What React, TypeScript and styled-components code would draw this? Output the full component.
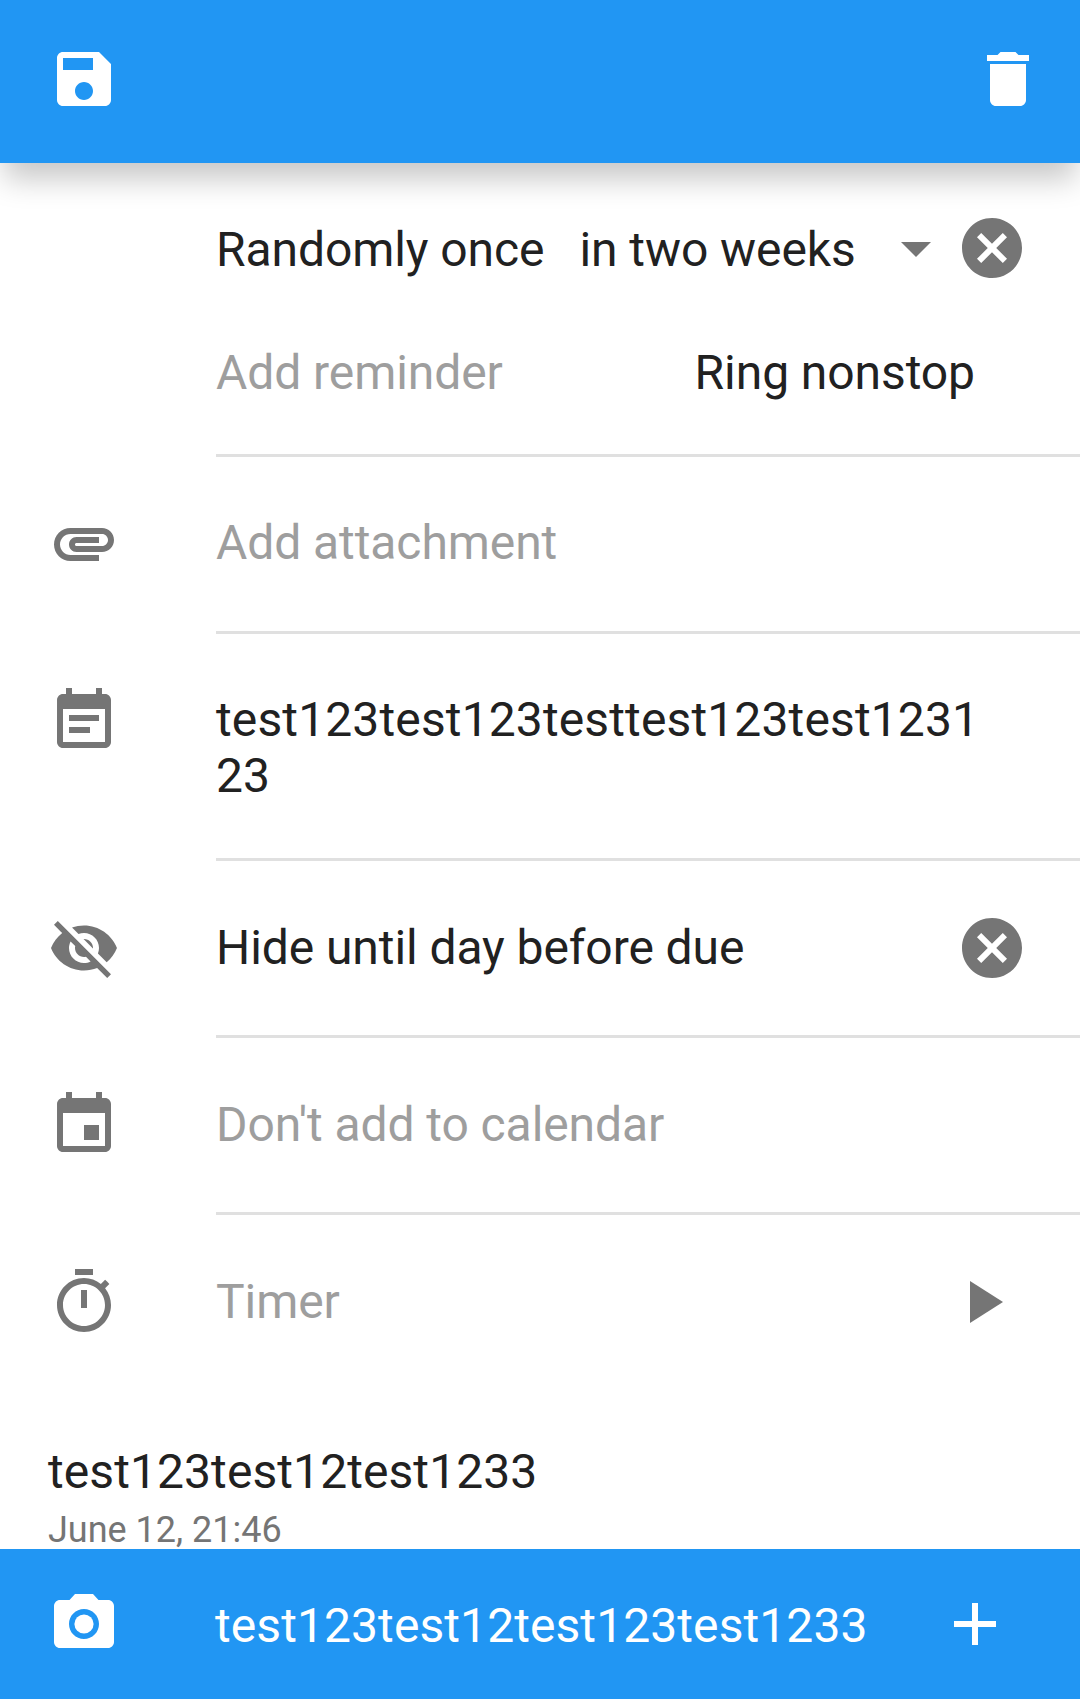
import React from 'react';
import styled, { createGlobalStyle } from 'styled-components';

const GlobalStyle = createGlobalStyle`
  html, body {
    margin: 0;
    padding: 0;
    background: #fff;
  }
  * {
    box-sizing: border-box;
  }
`;

const paths = {
  save: 'M17 3H5c-1.11 0-2 .9-2 2v14c0 1.1.89 2 2 2h14c1.1 0 2-.9 2-2V7l-4-4zm-5 16c-1.66 0-3-1.34-3-3s1.34-3 3-3 3 1.34 3 3-1.34 3-3 3zm3-10H5V5h10v4z',
  trash: 'M6 19c0 1.1.9 2 2 2h8c1.1 0 2-.9 2-2V7H6v12zM19 4h-3.5l-1-1h-5l-1 1H5v2h14V4z',
  cancel: 'M12 2C6.47 2 2 6.47 2 12s4.47 10 10 10 10-4.47 10-10S17.53 2 12 2zm5 13.59L15.59 17 12 13.41 8.41 17 7 15.59 10.59 12 7 8.41 8.41 7 12 10.59 15.59 7 17 8.41 13.41 12 17 15.59z',
  arrow: 'M7 10l5 5 5-5z',
  clip: 'M2 12.5C2 9.46 4.46 7 7.5 7H18c2.21 0 4 1.79 4 4s-1.79 4-4 4H9.5C8.12 15 7 13.88 7 12.5S8.12 10 9.5 10H17v2H9.41c-.55 0-.55 1 0 1H18c1.1 0 2-.9 2-2s-.9-2-2-2H7.5C5.57 9 4 10.57 4 12.5S5.57 16 7.5 16H17v2H7.5C4.46 18 2 15.54 2 12.5z',
  note: 'M17 10H7v2h10v-2zm2-7h-1V1h-2v2H8V1H6v2H5c-1.11 0-1.99.9-1.99 2L3 19c0 1.1.89 2 2 2h14c1.1 0 2-.9 2-2V5c0-1.1-.9-2-2-2zm0 16H5V8h14v11zm-5-5H7v2h7v-2z',
  eyeOff: 'M12 7c2.76 0 5 2.24 5 5 0 .65-.13 1.26-.36 1.83l2.92 2.92c1.51-1.26 2.7-2.89 3.43-4.75-1.73-4.39-6-7.5-11-7.5-1.4 0-2.74.25-3.98.7l2.16 2.16C10.74 7.13 11.35 7 12 7zM2 4.27l2.28 2.28.46.46C3.08 8.3 1.78 10.02 1 12c1.73 4.39 6 7.5 11 7.5 1.55 0 3.03-.3 4.38-.84l.42.42L19.73 22 21 20.73 3.27 3 2 4.27zM7.53 9.8l1.55 1.55c-.05.21-.08.43-.08.65 0 1.66 1.34 3 3 3 .22 0 .44-.03.65-.08l1.55 1.55c-.67.33-1.41.53-2.2.53-2.76 0-5-2.24-5-5 0-.79.2-1.53.53-2.2zm4.31-.78l3.15 3.15.02-.16c0-1.66-1.34-3-3-3l-.17.01z',
  event: 'M17 12h-5v5h5v-5zM16 1v2H8V1H6v2H5c-1.11 0-1.99.9-1.99 2L3 19c0 1.1.89 2 2 2h14c1.1 0 2-.9 2-2V5c0-1.1-.9-2-2-2h-1V1h-2zm3 18H5V8h14v11z',
  timer: 'M15 1H9v2h6V1zm-4 13h2V8h-2v6zm8.03-6.61l1.42-1.42c-.43-.51-.9-.99-1.41-1.41l-1.42 1.42C16.07 4.74 14.12 4 12 4c-4.97 0-9 4.03-9 9s4.02 9 9 9 9-4.03 9-9c0-2.12-.74-4.07-1.97-5.61zM12 20c-3.87 0-7-3.13-7-7s3.13-7 7-7 7 3.13 7 7-3.13 7-7 7z',
  play: 'M8 5v14l11-7z',
  camera: 'M9 2L7.17 4H4c-1.1 0-2 .9-2 2v12c0 1.1.9 2 2 2h16c1.1 0 2-.9 2-2V6c0-1.1-.9-2-2-2h-3.17L15 2H9zm3 15c-2.76 0-5-2.24-5-5s2.24-5 5-5 5 2.24 5 5-2.24 5-5 5z',
  plus: 'M19 13h-6v6h-2v-6H5v-2h6V5h2v6h6v2z',
};

const Svg = styled.svg<{ $light?: boolean }>`
  display: block;
  flex: none;
  width: 72px;
  height: 72px;
  fill: ${(p) => (p.$light ? '#fff' : '#757575')};
`;

function Icon({ name, light, children }: { name: keyof typeof paths; light?: boolean; children?: React.ReactNode }) {
  return (
    <Svg viewBox="0 0 24 24" $light={light}>
      <path d={paths[name]} />
      {children}
    </Svg>
  );
}

const Screen = styled.div`
  width: 1080px;
  height: 1699px;
  display: flex;
  flex-direction: column;
  overflow: hidden;
  background: #fff;
  font-family: Roboto, "Liberation Sans", sans-serif;
  font-size: 48px;
  color: #212121;
`;

const Toolbar = styled.header`
  position: relative;
  z-index: 2;
  flex: none;
  height: 163px;
  padding: 43px 36px 0 48px;
  display: flex;
  justify-content: space-between;
  align-items: flex-start;
  background: #2196f3;
  box-shadow: 0 20px 28px -4px rgba(0, 0, 0, 0.22);
`;

const Content = styled.main`
  flex: 1;
  min-height: 0;
  overflow: hidden;
`;

const Row = styled.section<{ $bottom?: number }>`
  display: flex;
  align-items: center;
  height: 174px;
  padding: 0 0 ${(p) => p.$bottom ?? 0}px 48px;
`;

const NoteRow = styled.section`
  display: flex;
  align-items: flex-start;
  height: 224px;
  padding: 51px 0 0 48px;
`;

const IconSlot = styled.div`
  flex: none;
  width: 168px;
`;

const Body = styled.div`
  flex: 1;
  min-width: 0;
`;

const Divider = styled.hr`
  height: 3px;
  margin: 0 0 0 216px;
  border: 0;
  background: #e0e0e0;
`;

const Label = styled.span<{ $hint?: boolean }>`
  color: ${(p) => (p.$hint ? '#9e9e9e' : '#212121')};
  letter-spacing: -0.08px;
  white-space: nowrap;
`;

const RowLabel = styled(Label)`
  display: block;
  margin-bottom: 2px;
`;

const Recurrence = styled.section`
  padding: 23px 0 20px 216px;
`;

const RecurrenceLine = styled.div`
  display: flex;
  align-items: center;
  height: 124px;
`;

const RepeatLabel = styled(Label)`
  padding-top: 2px;
`;

const RepeatValue = styled(RepeatLabel)`
  margin-left: 35px;
  flex: 1;
`;

const ClearSlot = styled.div`
  flex: none;
  margin: 0 52px 0 4px;
`;

const RingLabel = styled(Label)`
  margin-left: auto;
  margin-right: 105px;
`;

const SpacedBody = styled(Body)<{ $right: number }>`
  display: flex;
  align-items: center;
  justify-content: space-between;
  padding-right: ${(p) => p.$right}px;
`;

const Notes = styled.div`
  width: 780px;
  margin-top: 7px;
  line-height: 56px;
  letter-spacing: 0.13px;
  word-break: break-all;
  color: #212121;
`;

const CommentBlock = styled.article`
  padding: 53px 48px 0;
`;

const CommentText = styled.div`
  line-height: 60px;
  letter-spacing: 0.08px;
`;

const CommentDate = styled.div`
  margin-top: 4px;
  font-size: 36px;
  line-height: 48px;
  color: #757575;
`;

const CommentBar = styled.footer`
  flex: none;
  height: 150px;
  display: flex;
  align-items: center;
  padding: 0 69px 0 48px;
  background: #2196f3;
  color: #fff;
`;

const CommentInput = styled.div`
  flex: 1;
  margin-left: 95px;
  padding-top: 2px;
  letter-spacing: 0.08px;
  white-space: nowrap;
`;

export default function App() {
  return (
    <Screen>
      <GlobalStyle />
      <Toolbar>
        <Icon name="save" light />
        <Icon name="trash" light />
      </Toolbar>
      <Content>
        <Recurrence>
          <RecurrenceLine>
            <RepeatLabel>Randomly once</RepeatLabel>
            <RepeatValue>in two weeks</RepeatValue>
            <Icon name="arrow" />
            <ClearSlot>
              <Icon name="cancel" />
            </ClearSlot>
          </RecurrenceLine>
          <RecurrenceLine>
            <Label $hint>Add reminder</Label>
            <RingLabel>Ring nonstop</RingLabel>
          </RecurrenceLine>
        </Recurrence>
        <Divider />
        <Row $bottom={2}>
          <IconSlot>
            <Icon name="clip" />
          </IconSlot>
          <Body>
            <RowLabel $hint>Add attachment</RowLabel>
          </Body>
        </Row>
        <Divider />
        <NoteRow>
          <IconSlot>
            <Icon name="note" />
          </IconSlot>
          <Body>
            <Notes>test123test123testtest123test123123</Notes>
          </Body>
        </NoteRow>
        <Divider />
        <Row>
          <IconSlot>
            <Icon name="eyeOff" />
          </IconSlot>
          <SpacedBody $right={52}>
            <RowLabel>Hide until day before due</RowLabel>
            <Icon name="cancel" />
          </SpacedBody>
        </Row>
        <Divider />
        <Row>
          <IconSlot>
            <Icon name="event" />
          </IconSlot>
          <Body>
            <RowLabel $hint>Don't add to calendar</RowLabel>
          </Body>
        </Row>
        <Divider />
        <Row>
          <IconSlot>
            <Icon name="timer" />
          </IconSlot>
          <SpacedBody $right={62}>
            <RowLabel $hint>Timer</RowLabel>
            <Icon name="play" />
          </SpacedBody>
        </Row>
        <CommentBlock>
          <CommentText>test123test12test1233</CommentText>
          <CommentDate>June 12, 21:46</CommentDate>
        </CommentBlock>
      </Content>
      <CommentBar>
        <Icon name="camera" light>
          <circle cx="12" cy="12" r="3.2" />
        </Icon>
        <CommentInput>test123test12test123test1233</CommentInput>
        <Icon name="plus" light />
      </CommentBar>
    </Screen>
  );
}
